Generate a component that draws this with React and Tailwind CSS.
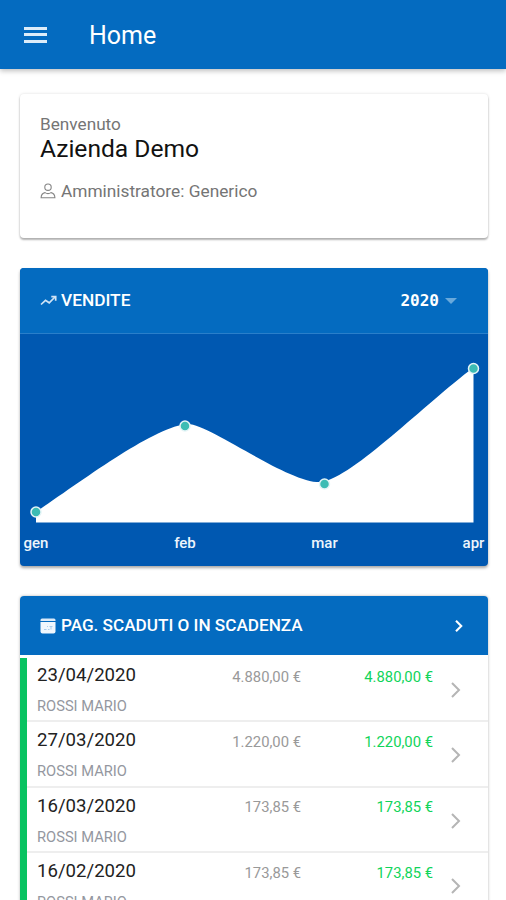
const payments = [
  { date: "23/04/2020", customer: "ROSSI MARIO", total: "4.880,00 €", due: "4.880,00 €" },
  { date: "27/03/2020", customer: "ROSSI MARIO", total: "1.220,00 €", due: "1.220,00 €" },
  { date: "16/03/2020", customer: "ROSSI MARIO", total: "173,85 €", due: "173,85 €" },
  { date: "16/02/2020", customer: "ROSSI MARIO", total: "173,85 €", due: "173,85 €" },
];

const points = [
  { label: "gen", x: 16, y: 178 },
  { label: "feb", x: 165, y: 92 },
  { label: "mar", x: 304.5, y: 150 },
  { label: "apr", x: 453.5, y: 34.5 },
];

const Header = () => (
  <header className="flex h-[69px] items-center bg-[#046bc0] pl-6 text-white shadow-[0_2px_5px_rgba(0,0,0,0.25)]">
    <button aria-label="Menu" className="flex h-4 w-[23px] flex-col justify-between">
      <span className="h-[3px] w-full bg-[#dcecf9]" />
      <span className="h-[3px] w-full bg-[#dcecf9]" />
      <span className="h-[3px] w-full bg-[#dcecf9]" />
    </button>
    <h1 className="mt-[2px] ml-[42px] text-[25px] leading-8">Home</h1>
  </header>
);

const UserIcon = () => (
  <svg width="16" height="17" viewBox="0 0 16 17" fill="none" stroke="#858585" strokeWidth="1.1">
    <circle cx="8" cy="4.2" r="3.2" />
    <path d="M5 9.600C2.500 10.100 1.200 12.200 1.100 14.700h13.800c-.1-2.500-1.400-4.600-3.900-5.100-1.600 1.100-4.400 1.100-6 0z" />
  </svg>
);

const TrendIcon = () => (
  <svg width="17" height="12" viewBox="0 0 17 12" fill="none" stroke="#cfe3f5" strokeWidth="1.700">
    <path d="M1 9.500l4.500-4.200 3.700 2.500L15 2" />
    <path d="M11.300 1.600h4.400v4.200" />
  </svg>
);

const CalendarIcon = () => (
  <svg width="16" height="16" viewBox="0 0 16 16">
    <path d="M2 .5h12a1.500 1.500 0 0 1 1.500 1.500v1H.5V2A1.500 1.500 0 0 1 2 .5z" fill="#dbeaf8" />
    <path d="M.5 4h15v9.500a2 2 0 0 1-2 2h-11a2 2 0 0 1-2-2z" fill="#f0f7fd" />
    <path d="M4 11.500h2.500M8 11.500h1.500M7 8.500h1M9.500 8.500h3M11 8.500v3" stroke="#a9cdec" />
  </svg>
);

const Chevron = ({ className, strokeWidth }) => (
  <svg className={className} viewBox="0 0 10 16" fill="none" stroke="currentColor" strokeWidth={strokeWidth}>
    <path d="M1 1l7 7-7 7" />
  </svg>
);

const WelcomeCard = () => (
  <section className="h-[144px] rounded-[4px] bg-white px-5 pt-[19px] text-[#757575] shadow-[0_2px_2px_rgba(0,0,0,0.28),0_0_3px_rgba(0,0,0,0.14)]">
    <p className="text-[17.2px] leading-[22px]">Benvenuto</p>
    <h2 className="mt-px text-[24.6px] leading-[26px] text-[#111]">Azienda Demo</h2>
    <p className="mt-[18px] flex items-center gap-[5px] text-[17.3px] leading-[22px]">
      <UserIcon />
      Amministratore: Generico
    </p>
  </section>
);

const SalesCard = () => (
  <section className="h-[298px] overflow-hidden rounded-[4px] bg-[#0058b1] text-white shadow-[0_2px_3px_rgba(0,0,0,0.35)]">
    <div className="flex h-[66px] items-center border-b border-[#2a7fca] bg-[#046bc0] pr-[31px] pl-5">
      <TrendIcon />
      <h2 className="mt-px ml-1 text-[17.3px] font-medium">VENDITE</h2>
      <button className="ml-auto flex items-center gap-[6px] font-['DejaVu_Sans_Mono',monospace] text-[16px] font-bold">
        2020
        <span className="border-x-[6px] border-t-[6px] border-x-transparent border-t-[#69a9db]" />
      </button>
    </div>
    <svg width="468" height="232" viewBox="0 0 468 232">
      <path
        d="M16 178C66 144 135 92 168 90C190 90 270 151 302 148C333 143 406 69 453.500 33.500V188.500H16Z"
        fill="#fff"
      />
      {points.map((p) => (
        <g key={p.label}>
          <circle cx={p.x} cy={p.y} r="5" fill="#3cbcb4" stroke="#e4f4f6" strokeWidth="1.500" />
          <text x={p.x} y="214" textAnchor="middle" fontSize="15" fontWeight="500" fill="#eef5fc">
            {p.label}
          </text>
        </g>
      ))}
    </svg>
  </section>
);

const PaymentRow = ({ payment }) => (
  <li className="flex h-[65.4px] border-b-2 border-[#eeeeee] pl-[10px] first:-mt-px">
    <div className="w-[140px]">
      <p className="mt-[6px] text-[18.6px] leading-6 text-[#222]">{payment.date}</p>
      <p className="mt-[9px] text-[14.7px] leading-5 text-[#9497a0]">{payment.customer}</p>
    </div>
    <p className="mt-[9.5px] w-[124px] text-right text-[14.8px] leading-5 text-[#999]">{payment.total}</p>
    <p className="mt-[9.5px] w-[132px] text-right text-[14.8px] leading-5 text-[#10d45a]">{payment.due}</p>
    <Chevron className="mt-[25px] ml-[17.5px] h-4 w-[10px] text-[#b5b5b5]" strokeWidth="2" />
  </li>
);

const PaymentsCard = () => (
  <section className="rounded-t-[4px] bg-white shadow-[0_0_3px_rgba(0,0,0,0.3)]">
    <div className="flex h-[59px] items-center rounded-t-[4px] bg-[#046bc0] pr-[25px] pl-5 text-white">
      <CalendarIcon />
      <h2 className="mt-px ml-[5px] text-[17.15px] font-medium">PAG. SCADUTI O IN SCADENZA</h2>
      <Chevron className="mt-px ml-auto h-3 w-2" strokeWidth="2.800" />
    </div>
    <ul className="mt-[3px] flow-root border-l-[7px] border-[#08c361]">
      {payments.map((payment) => (
        <PaymentRow key={payment.date} payment={payment} />
      ))}
    </ul>
  </section>
);

export default function App() {
  return (
    <div className="h-[900px] w-[506px] overflow-hidden bg-white font-[Roboto,sans-serif]">
      <Header />
      <main className="flex flex-col gap-[30px] pt-[25px] pr-[18px] pl-5">
        <WelcomeCard />
        <SalesCard />
        <PaymentsCard />
      </main>
    </div>
  );
}
